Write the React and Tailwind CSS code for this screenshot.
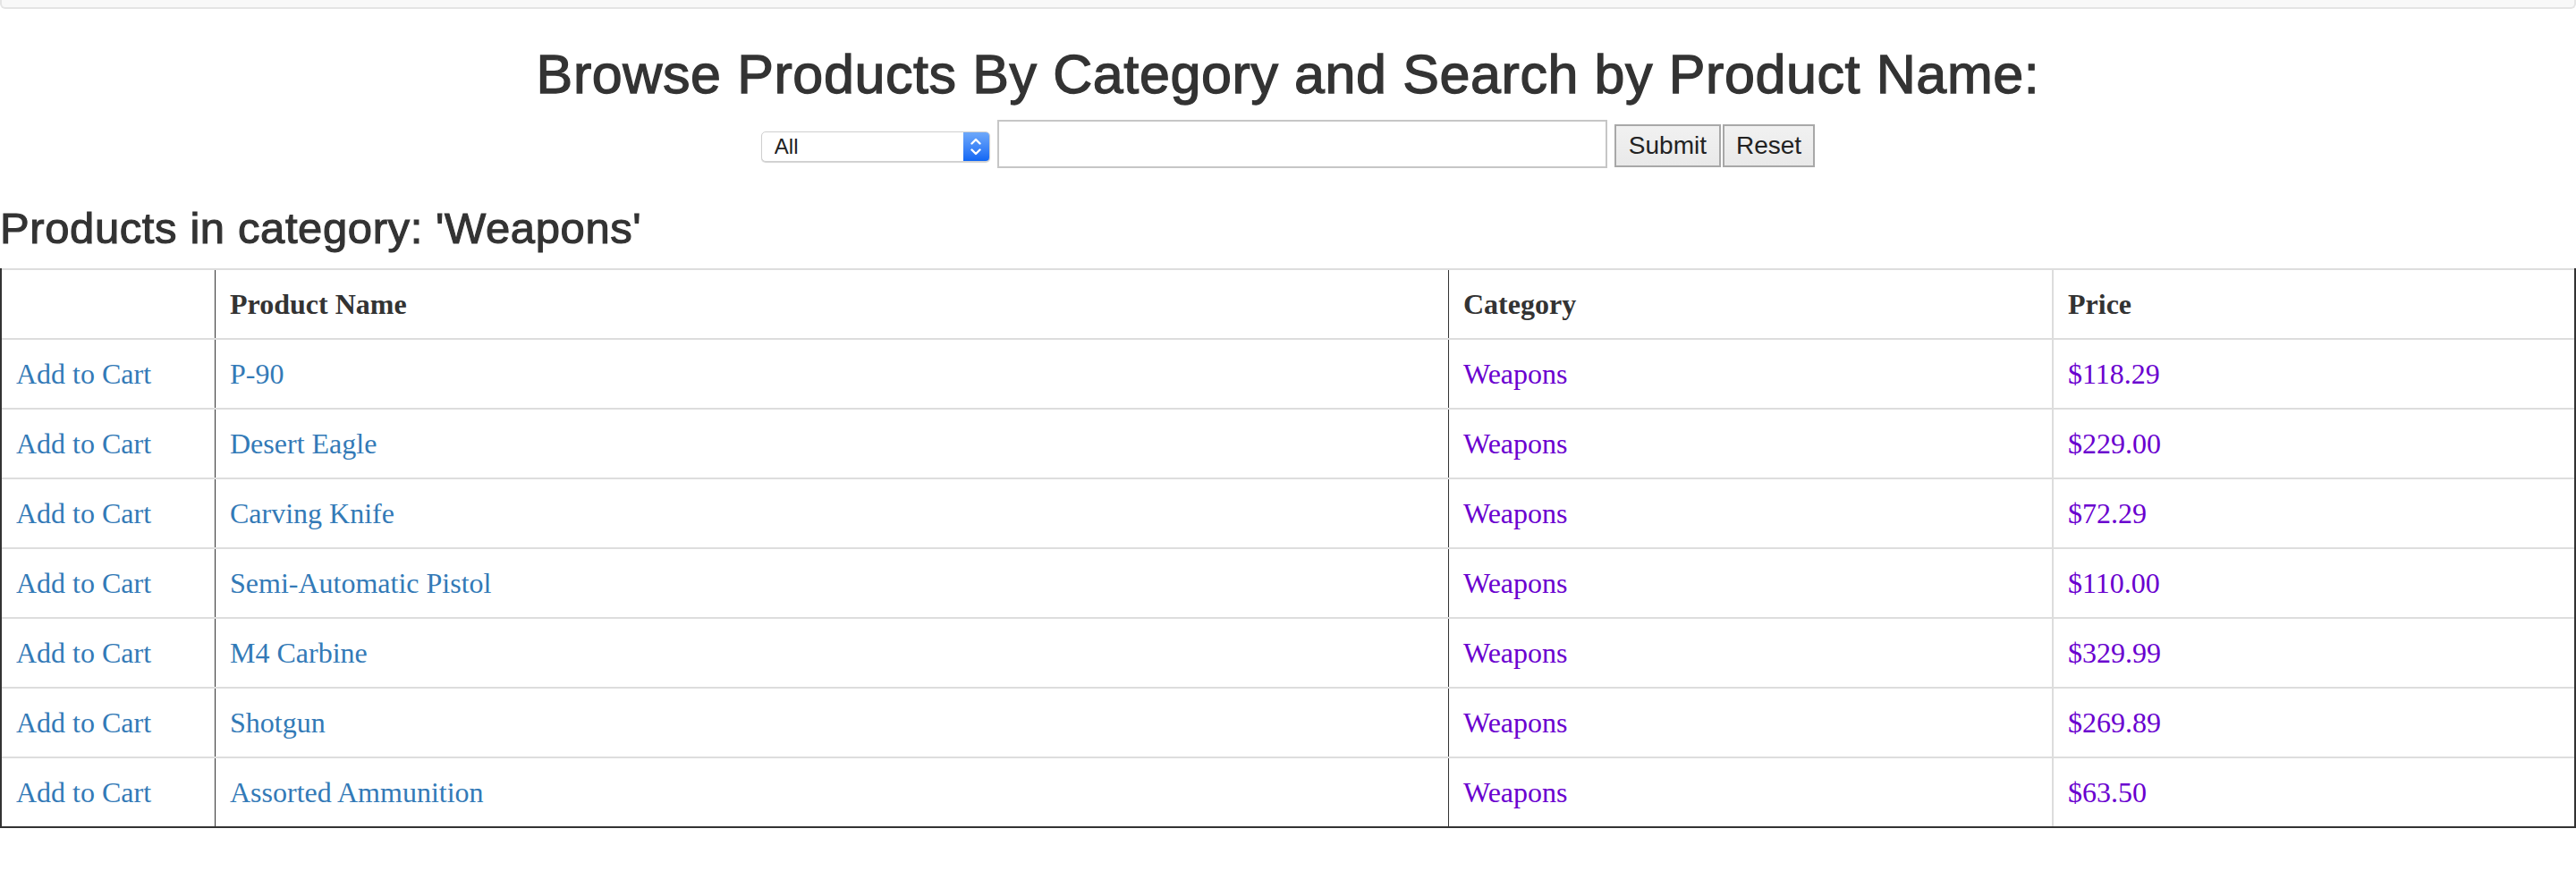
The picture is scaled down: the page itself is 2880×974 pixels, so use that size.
import { useState } from 'react';

const products = [
  { name: 'P-90', price: '$118.29' },
  { name: 'Desert Eagle', price: '$229.00' },
  { name: 'Carving Knife', price: '$72.29' },
  { name: 'Semi-Automatic Pistol', price: '$110.00' },
  { name: 'M4 Carbine', price: '$329.99' },
  { name: 'Shotgun', price: '$269.89' },
  { name: 'Assorted Ammunition', price: '$63.50' },
];

const sans = "font-['Liberation_Sans',Arial,sans-serif]";
const serif = "font-['Liberation_Serif','Times_New_Roman',serif]";
const cols = 'grid grid-cols-[239px_1379px_676px_582px] border-t-2 border-[#dddddd]';
const cell = 'px-4 py-4 text-[32px] leading-[44px]';

function CategorySelect() {
  return (
    <div className="mt-[13px] flex h-[34px] w-[256px] overflow-hidden rounded-[5px] border border-[#cfcfcf] bg-white shadow-[0_1px_1px_rgba(0,0,0,0.18)]">
      <select className={`${sans} flex-1 appearance-none bg-transparent pl-[14px] text-[24px] leading-[32px] text-[#222] outline-none`}>
        <option>All</option>
        <option>Weapons</option>
      </select>
      <span className="flex w-[29px] flex-col items-center justify-center gap-[4px] bg-gradient-to-b from-[#6ea8fa] to-[#0f66f4]">
        <svg width="12" height="8" viewBox="0 0 12 8" fill="none" stroke="white" strokeWidth="2.4" strokeLinecap="round" strokeLinejoin="round">
          <path d="M1.5 6.5 6 2l4.5 4.5" />
        </svg>
        <svg width="12" height="8" viewBox="0 0 12 8" fill="none" stroke="white" strokeWidth="2.4" strokeLinecap="round" strokeLinejoin="round">
          <path d="M1.5 1.5 6 6l4.5-4.5" />
        </svg>
      </span>
    </div>
  );
}

export default function App() {
  const [query, setQuery] = useState('');

  return (
    <div className="min-h-[974px] bg-white text-[#333]">
      <div className="h-[10px] rounded-b-[6px] border-x-2 border-b-2 border-[#e4e4e4] bg-[#f8f8f8]" />

      <h2 className={`${sans} mt-[40px] text-center text-[61px] leading-[66px] tracking-[0.6px] text-[#333] [-webkit-text-stroke:1.3px_#333]`}>
        Browse Products By Category and Search by Product Name:
      </h2>

      <form className="mt-[18px] flex items-start justify-center" onSubmit={(e) => e.preventDefault()}>
        <CategorySelect />
        <input
          value={query}
          onChange={(e) => setQuery(e.target.value)}
          className="ml-[8px] h-[54px] w-[682px] border-2 border-[#c6c6c6] bg-white outline-none"
        />
        <button
          type="submit"
          className={`${sans} ml-[8px] mt-[5px] h-[48px] border-2 border-[#a8a8a8] bg-gradient-to-b from-[#f1f1f1] to-[#e9e9e9] px-[14px] text-[28px] text-[#222]`}
        >
          Submit
        </button>
        <button
          type="reset"
          onClick={() => setQuery('')}
          className={`${sans} ml-[2px] mt-[5px] h-[48px] border-2 border-[#a8a8a8] bg-gradient-to-b from-[#f1f1f1] to-[#e9e9e9] px-[13px] text-[28px] text-[#222]`}
        >
          Reset
        </button>
      </form>

      <h3 className={`${sans} mt-[40px] mb-[17px] text-[49px] leading-[55px] tracking-[0.6px] text-[#333] [-webkit-text-stroke:1.1px_#333]`}>
        Products in category: 'Weapons'
      </h3>

      <div className={`${serif} border-x-2 border-b-2 border-[#333]`}>
        <div className={`${cols} font-bold text-[#333]`}>
          <div className={`${cell} border-r border-[#333]`}></div>
          <div className={`${cell} border-r border-[#333]`}>Product Name</div>
          <div className={`${cell} border-r-2 border-[#dddddd]`}>Category</div>
          <div className={cell}>Price</div>
        </div>
        {products.map((p) => (
          <div key={p.name} className={cols}>
            <div className={`${cell} border-r border-[#333]`}>
              <a href="#" className="text-[#337ab7]">Add to Cart</a>
            </div>
            <div className={`${cell} border-r border-[#333]`}>
              <a href="#" className="text-[#337ab7]">{p.name}</a>
            </div>
            <div className={`${cell} border-r-2 border-[#dddddd]`}>
              <a href="#" className="text-[#6a00cf]">Weapons</a>
            </div>
            <div className={`${cell} text-[#6a00cf]`}>{p.price}</div>
          </div>
        ))}
      </div>
    </div>
  );
}
